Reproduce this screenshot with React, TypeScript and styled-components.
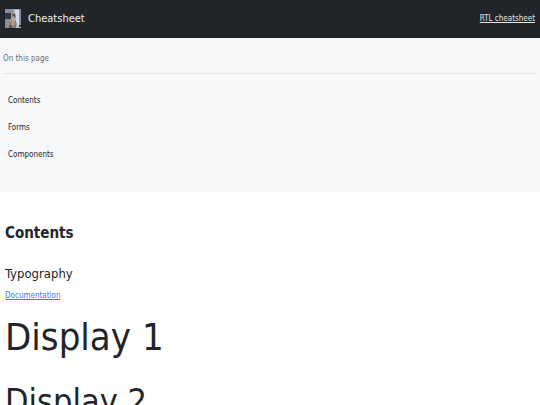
import React from "react";
import styled, { createGlobalStyle } from "styled-components";

const GlobalStyle = createGlobalStyle`
  *, *::before, *::after { box-sizing: border-box; }
  html { scrollbar-width: none; }
  body {
    margin: 0;
    background: #fff;
    color: #212529;
    font-family: "DejaVu Sans Condensed", "DejaVu Sans", sans-serif;
    font-size: 8px;
    line-height: 12px;
  }
`;

const Header = styled.header`
  display: flex;
  align-items: center;
  justify-content: space-between;
  min-height: 38px;
  padding: 0 5px;
  background: #212529;
  border-bottom: 1px solid #1a1e21;
`;

const Brand = styled.h1`
  display: flex;
  align-items: center;
  gap: 7px;
  margin: 0;
  color: #f0f1f2;
  font-size: 11px;
  line-height: 20px;
  font-weight: 400;
`;

const Photo = styled.svg`
  display: block;
  width: 16px;
  height: 19px;
`;

const HeaderLink = styled.a`
  color: #e4e6e8;
`;

const Contents = styled.aside`
  padding: 15px 3px 24px;
  background: #f6f8fa;
`;

const ContentsTitle = styled.h2`
  margin: 0;
  padding-bottom: 8px;
  border-bottom: 1px solid #e5e7e9;
  color: #6c7177;
  font-size: 8px;
  line-height: 12px;
  font-weight: 400;
`;

const ContentsList = styled.ul`
  display: flex;
  flex-direction: column;
  margin: 0;
  padding: 13px 5px 0;
  list-style: none;
`;

const ContentsLink = styled.a`
  display: block;
  line-height: 27px;
  color: #212529;
  text-decoration: none;
`;

const Main = styled.main`
  padding: 29px 5px 0;
`;

const SectionTitle = styled.h2`
  margin: 0 0 17px;
  font-size: 15px;
  line-height: 24px;
  font-weight: 700;
`;

const TopicTitle = styled.h3`
  margin: 0 0 4px;
  font-size: 13px;
  line-height: 24px;
  font-weight: 400;
`;

const DocLink = styled.a`
  display: inline-block;
  color: #2f80f5;
`;

const Display = styled.p<{ $size: number }>`
  margin: 0;
  padding-top: 6px;
  font-size: ${(p) => p.$size}px;
  line-height: 58px;
`;

const sections = ["Contents", "Forms", "Components"];

function CatPhoto() {
  return (
    <Photo viewBox="0 0 16 19" preserveAspectRatio="none" role="img" aria-label="Cat">
      <path fill="#a3a9b7" d="M0 0h16v19H0z" />
      <path fill="#8a8f9c" d="M0 0h8v4H0z" />
      <path fill="#303643" d="M0 4h6v6H0z" />
      <path fill="#8b8e96" d="M0 10h5v9H0z" />
      <path fill="#d6dae4" d="M10 1h4v16h-4z" />
      <path fill="#8390a9" d="M14 0h2v16h-2z" />
      <path fill="#8b7d74" d="M7 4l1 1 2-1 1 4-1 2 2 5-1 4H4l1-6 2-3z" />
      <path fill="#b5a498" d="M7 8h2l1 3-1 5-3 1 1-6z" />
      <path fill="#65564e" d="M7 5h3v2H7zM4 16h3v3H4z" />
      <path fill="#c5c0bf" d="M11 16h5v3h-5z" />
      <path fill="#37353a" d="M14 16h2v2h-2z" />
    </Photo>
  );
}

export default function App() {
  return (
    <>
      <GlobalStyle />
      <Header>
        <Brand>
          <CatPhoto />
          Cheatsheet
        </Brand>
        <HeaderLink href="#rtl">RTL cheatsheet</HeaderLink>
      </Header>
      <Contents>
        <ContentsTitle>On this page</ContentsTitle>
        <nav aria-label="On this page">
          <ContentsList>
            {sections.map((name) => (
              <li key={name}>
                <ContentsLink href={`#${name.toLowerCase()}`}>{name}</ContentsLink>
              </li>
            ))}
          </ContentsList>
        </nav>
      </Contents>
      <Main>
        <section id="contents">
          <SectionTitle>Contents</SectionTitle>
          <TopicTitle>Typography</TopicTitle>
          <DocLink href="#typography">Documentation</DocLink>
          <Display $size={38}>Display 1</Display>
          <Display $size={34}>Display 2</Display>
        </section>
      </Main>
    </>
  );
}
